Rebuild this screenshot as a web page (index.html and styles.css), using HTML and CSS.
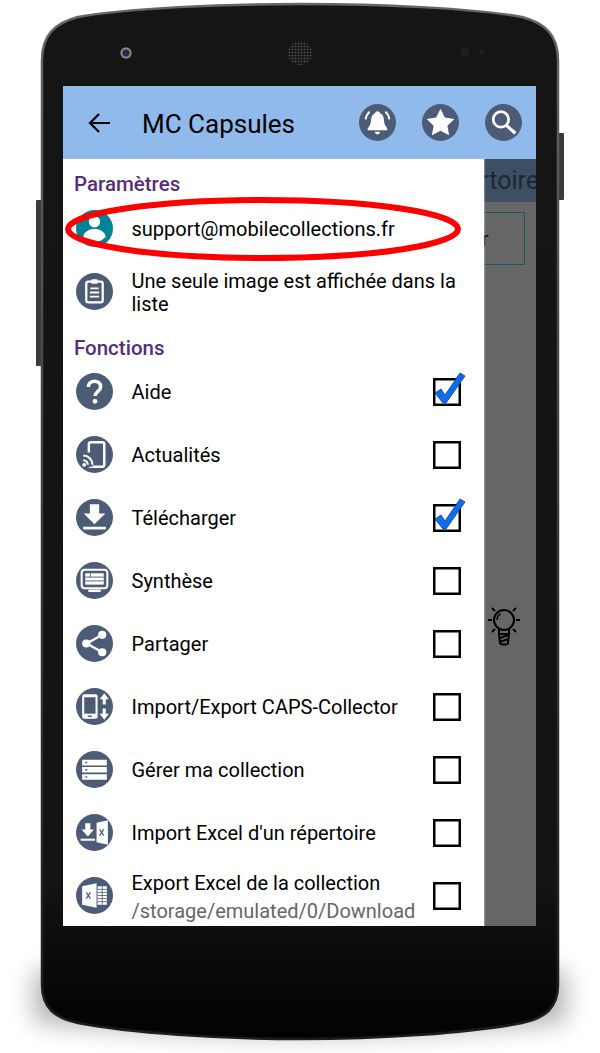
FILE: index.html
```html
<!DOCTYPE html>
<html lang="fr">
<head>
  <meta charset="UTF-8" />
  <title>MC Capsules</title>
  <link rel="stylesheet" href="styles.css">
</head>
<body>

<div class="page">
  <!-- Phone body, drawn behind the screen -->
  <svg class="phone-shape" viewBox="0 0 600 1053" width="600" height="1053">
    <defs>
      <linearGradient id="bodyFill" x1="0" y1="0" x2="0" y2="1">
        <stop offset="0" stop-color="#151515"/>
        <stop offset="0.85" stop-color="#131313"/>
        <stop offset="1" stop-color="#020202"/>
      </linearGradient>
      <linearGradient id="bodyEdge" x1="0" y1="0" x2="0" y2="1">
        <stop offset="0" stop-color="#666"/>
        <stop offset="0.5" stop-color="#3c3c3c"/>
        <stop offset="1" stop-color="#1c1c1c"/>
      </linearGradient>
      <filter id="blur" x="-20%" y="-50%" width="140%" height="200%"><feGaussianBlur stdDeviation="12"/></filter>
      <radialGradient id="lens">
        <stop offset="0" stop-color="#2438c8"/>
        <stop offset="0.4" stop-color="#1c1c2c"/>
        <stop offset="0.8" stop-color="#999"/>
        <stop offset="1" stop-color="#333"/>
      </radialGradient>
      <pattern id="mesh" width="3" height="3" patternUnits="userSpaceOnUse">
        <rect width="3" height="3" fill="#1a1a1a"/>
        <circle cx="1.500" cy="1.500" r="0.800" fill="#555"/>
      </pattern>
    </defs>
    <path d="M34 970H566V1022Q300 1048 34 1022Z" fill="#000" opacity="0.3" filter="url(#blur)"/>
    <rect x="36" y="200" width="8" height="166" rx="1" fill="#3a3a3a"/>
    <rect x="556" y="133" width="8" height="67" rx="1" fill="#3a3a3a"/>
    <path d="M42 60C42 35 55 23 78 17C130 8 220 4 300 4C380 4 470 8 522 17C545 23 558 35 558 60V985C558 1008 545 1018 522 1023C470 1033 380 1039 300 1039C220 1039 130 1033 78 1023C55 1018 42 1008 42 985Z" fill="url(#bodyFill)" stroke="url(#bodyEdge)" stroke-width="2.500"/>
    <circle cx="126" cy="53" r="6" fill="url(#lens)"/>
    <circle cx="300" cy="53" r="12" fill="url(#mesh)"/>
    <circle cx="465" cy="52" r="4.500" fill="#1f1f1f"/>
    <circle cx="482" cy="52" r="3" fill="#1f1f1f"/>
  </svg>

  <div class="screen">
    <header class="appbar">
      <svg class="back" viewBox="0 0 22 20" width="22" height="20">
        <path d="M22 10H2M11 1L2 10l9 9" fill="none" stroke="#000" stroke-width="2.200"/>
      </svg>
      <span class="appbar-title">MC Capsules</span>
      <div class="appbar-actions">
        <svg class="icon" viewBox="0 0 36 36">
          <circle cx="18" cy="18" r="18" fill="#4d5c76"/>
          <path d="M18 7c-1.500 0-2.300 1-2.500 2-2.500 1-3.500 3.500-3.700 6-.2 4-1.300 6.500-3.300 8.500v2h19v-2c-2-2-3.100-4.500-3.300-8.500-.2-2.500-1.200-5-3.700-6-.2-1-1-2-2.500-2z" fill="#fff"/>
          <path d="M15.500 27h5c0 1.500-1 2.500-2.500 2.500s-2.500-1-2.500-2.500z" fill="#fff"/>
          <path d="M6.500 15c.3-3 1.500-5.500 3.800-7.500M29.500 15c-.3-3-1.500-5.500-3.800-7.500" fill="none" stroke="#fff" stroke-width="1.800"/>
        </svg>
        <svg class="icon" viewBox="0 0 36 36">
          <circle cx="18" cy="18" r="18" fill="#4d5c76"/>
          <path d="M18 4.500l4.200 8.700 9.300 1.300-6.800 6.600 1.700 9.400-8.400-4.500-8.400 4.500 1.700-9.400-6.800-6.600 9.300-1.300z" fill="#fff"/>
        </svg>
        <svg class="icon" viewBox="0 0 36 36">
          <circle cx="18" cy="18" r="18" fill="#4d5c76"/>
          <circle cx="15.500" cy="15" r="7.500" fill="none" stroke="#fff" stroke-width="2.600"/>
          <path d="M21 21l8.500 7.500" fill="none" stroke="#fff" stroke-width="3.200"/>
        </svg>
      </div>
    </header>

    <div class="content">
      <nav class="drawer">
        <h2 class="section-title">Paramètres</h2>

        <div class="row">
          <svg class="icon" viewBox="0 0 36 36">
            <circle cx="18" cy="18" r="18" fill="#008299"/>
            <circle cx="18" cy="11.500" r="5.500" fill="#fff"/>
            <path d="M7 26c1-5 6-7.500 11-7.500s10 2.500 11 7.500c-2.500 3-6.500 5-11 5s-8.500-2-11-5z" fill="#fff"/>
          </svg>
          <span class="row-label">support@mobilecollections.fr</span>
        </div>

        <div class="row row-wrap">
          <svg class="icon" viewBox="0 0 36 36">
            <circle cx="18" cy="18" r="18" fill="#4d5c76"/>
            <rect x="10" y="8.500" width="16" height="20" rx="2" fill="none" stroke="#fff" stroke-width="2.200"/>
            <rect x="15" y="6" width="6" height="4.500" rx="1" fill="#fff"/>
            <path d="M14 15h8M13.500 19h9M13.500 23h9" stroke="#fff" stroke-width="1.800"/>
          </svg>
          <span class="row-label row-label-wrap">Une seule image est affichée dans la liste</span>
        </div>

        <h2 class="section-title">Fonctions</h2>

        <div class="row">
          <svg class="icon" viewBox="0 0 36 36">
            <circle cx="18" cy="18" r="18" fill="#4d5c76"/>
            <path d="M12 13.500c0-3.500 2.700-5.500 6-5.500s6 2 6 5.300c0 4.700-5.500 4.700-5.500 9" fill="none" stroke="#fff" stroke-width="3.400"/>
            <circle cx="18.500" cy="27.500" r="2.300" fill="#fff"/>
          </svg>
          <span class="row-label">Aide</span>
          <svg class="check" viewBox="0 0 28 28" width="28" height="28">
            <rect x="1.250" y="1.250" width="25.500" height="25.500" fill="none" stroke="#000" stroke-width="2.500"/>
            <path d="M2 15l6-4 4 6L27-5l5 3-19 27h-3z" fill="#0b6df0" stroke="#0a3c80" stroke-width="0.800"/>
          </svg>
        </div>

        <div class="row">
          <svg class="icon" viewBox="0 0 36 36">
            <circle cx="18" cy="18" r="18" fill="#4d5c76"/>
            <rect x="12.500" y="6" width="15" height="24" rx="2" fill="none" stroke="#fff" stroke-width="2.400"/>
            <path d="M7 16h9v14H7z" fill="#4d5c76"/>
            <path d="M7 19c5 0 9 4 9 9M7 23.500c2.500 0 4.500 2 4.500 4.500" fill="none" stroke="#fff" stroke-width="2"/>
            <circle cx="8" cy="28" r="1.800" fill="#fff"/>
          </svg>
          <span class="row-label">Actualités</span>
          <svg class="check" viewBox="0 0 28 28" width="28" height="28">
            <rect x="1.250" y="1.250" width="25.500" height="25.500" fill="none" stroke="#000" stroke-width="2.500"/>
          </svg>
        </div>

        <div class="row">
          <svg class="icon" viewBox="0 0 36 36">
            <circle cx="18" cy="18" r="18" fill="#4d5c76"/>
            <path d="M13.500 5h9v9h6L18 24.500 7.500 14h6z" fill="#fff"/>
            <rect x="7" y="27" width="22" height="2.600" fill="#fff"/>
          </svg>
          <span class="row-label">Télécharger</span>
          <svg class="check" viewBox="0 0 28 28" width="28" height="28">
            <rect x="1.250" y="1.250" width="25.500" height="25.500" fill="none" stroke="#000" stroke-width="2.500"/>
            <path d="M2 15l6-4 4 6L27-5l5 3-19 27h-3z" fill="#0b6df0" stroke="#0a3c80" stroke-width="0.800"/>
          </svg>
        </div>

        <div class="row">
          <svg class="icon" viewBox="0 0 36 36">
            <circle cx="18" cy="18" r="18" fill="#4d5c76"/>
            <rect x="5.500" y="7.500" width="25" height="18" rx="3" fill="none" stroke="#fff" stroke-width="2"/>
            <rect x="9" y="11" width="18" height="11" fill="#fff"/>
            <path d="M9 14.700h18M9 18.400h18M14 11v3.700" stroke="#4d5c76" stroke-width="0.900"/>
            <path d="M12 28h12" stroke="#fff" stroke-width="2.400"/>
          </svg>
          <span class="row-label">Synthèse</span>
          <svg class="check" viewBox="0 0 28 28" width="28" height="28">
            <rect x="1.250" y="1.250" width="25.500" height="25.500" fill="none" stroke="#000" stroke-width="2.500"/>
          </svg>
        </div>

        <div class="row">
          <svg class="icon" viewBox="0 0 36 36">
            <circle cx="18" cy="18" r="18" fill="#4d5c76"/>
            <path d="M25.500 9.500L10.500 18l15 8.500" fill="none" stroke="#fff" stroke-width="2.400"/>
            <circle cx="25.500" cy="9.500" r="4" fill="#fff"/>
            <circle cx="10" cy="18" r="4" fill="#fff"/>
            <circle cx="25.500" cy="26.500" r="4" fill="#fff"/>
          </svg>
          <span class="row-label">Partager</span>
          <svg class="check" viewBox="0 0 28 28" width="28" height="28">
            <rect x="1.250" y="1.250" width="25.500" height="25.500" fill="none" stroke="#000" stroke-width="2.500"/>
          </svg>
        </div>

        <div class="row">
          <svg class="icon" viewBox="0 0 36 36">
            <circle cx="18" cy="18" r="18" fill="#4d5c76"/>
            <rect x="6" y="6" width="15" height="24" rx="2" fill="#fff"/>
            <rect x="8" y="9" width="11" height="16" fill="#4d5c76"/>
            <path d="M11.500 27.500h4" stroke="#4d5c76" stroke-width="1.400"/>
            <path d="M27.500 5l4.500 6h-3v5h-3v-5h-3zM26 20h3v5h3l-4.500 6-4.500-6h3z" fill="#fff"/>
          </svg>
          <span class="row-label">Import/Export CAPS-Collector</span>
          <svg class="check" viewBox="0 0 28 28" width="28" height="28">
            <rect x="1.250" y="1.250" width="25.500" height="25.500" fill="none" stroke="#000" stroke-width="2.500"/>
          </svg>
        </div>

        <div class="row">
          <svg class="icon" viewBox="0 0 36 36">
            <circle cx="18" cy="18" r="18" fill="#4d5c76"/>
            <path d="M6 8.500h24v5.500H6zM6 15.500h24V21H6zM6 22.500h24V28H6z" fill="#fff"/>
            <path d="M9 11.200h2M9 18.200h2M9 25.200h2" stroke="#4d5c76" stroke-width="1.400"/>
          </svg>
          <span class="row-label">Gérer ma collection</span>
          <svg class="check" viewBox="0 0 28 28" width="28" height="28">
            <rect x="1.250" y="1.250" width="25.500" height="25.500" fill="none" stroke="#000" stroke-width="2.500"/>
          </svg>
        </div>

        <div class="row">
          <svg class="icon" viewBox="0 0 36 36">
            <circle cx="18" cy="18" r="18" fill="#4d5c76"/>
            <path d="M9 9h5v6h3.500l-6 7-6-7H9z" fill="#fff"/>
            <rect x="4.500" y="24" width="14" height="2" fill="#fff"/>
            <path d="M20 8.500l11-2.500v24l-11-2.500z" fill="#fff"/>
            <path d="M23 15l4 6M27 15l-4 6" stroke="#4d5c76" stroke-width="1.200"/>
          </svg>
          <span class="row-label">Import Excel d'un répertoire</span>
          <svg class="check" viewBox="0 0 28 28" width="28" height="28">
            <rect x="1.250" y="1.250" width="25.500" height="25.500" fill="none" stroke="#000" stroke-width="2.500"/>
          </svg>
        </div>

        <div class="row">
          <svg class="icon" viewBox="0 0 36 36">
            <circle cx="18" cy="18" r="18" fill="#4d5c76"/>
            <path d="M6 9l14-3v24l-14-3z" fill="#fff"/>
            <path d="M10 15l4 6M14 15l-4 6" stroke="#4d5c76" stroke-width="1.200"/>
            <rect x="21" y="9" width="9" height="18" fill="#fff"/>
            <path d="M21 12h9M21 15h9M21 18h9M21 21h9M21 24h9M25.500 9v18" stroke="#4d5c76" stroke-width="0.800"/>
          </svg>
          <span class="row-text">
            <span class="row-label">Export Excel de la collection</span>
            <span class="row-sub">/storage/emulated/0/Download</span>
          </span>
          <svg class="check" viewBox="0 0 28 28" width="28" height="28">
            <rect x="1.250" y="1.250" width="25.500" height="25.500" fill="none" stroke="#000" stroke-width="2.500"/>
          </svg>
        </div>
      </nav>

      <!-- Dimmed page behind the drawer -->
      <div class="behind">
        <div class="behind-title">Répertoire</div>
        <div class="behind-button">Trier</div>
        <svg class="bulb" viewBox="0 0 36 44" width="36" height="44">
          <circle cx="18" cy="15" r="10" fill="none" stroke="#000" stroke-width="2"/>
          <path d="M11 15c0-3 1.500-5 3.500-6" fill="none" stroke="#000" stroke-width="1.500"/>
          <path d="M13 24v5h10v-5M13 29l1 9c0 2 8 2 8 0l1-9M14 33l8-3M14 37l8-3" fill="none" stroke="#000" stroke-width="2"/>
          <path d="M2 15h4M30 15h4M6 3l3 3M30 3l-3 3M6 27l3-3M30 27l-3-3" stroke="#000" stroke-width="1.800"/>
        </svg>
      </div>
    </div>

    <!-- Hand-drawn red highlight over the first row -->
    <svg class="highlight" viewBox="0 0 400 70" width="400" height="70">
      <ellipse cx="200" cy="35" rx="195" ry="29" fill="none" stroke="#f00" stroke-width="6"/>
    </svg>
  </div>
</div>

</body>
</html>
```

FILE: styles.css
```css
body {
  margin: 0;
  background: #fff;
  font-family: Roboto, "Liberation Sans", sans-serif;
  color: #000;
}

.page {
  position: relative;
  width: 600px;
  height: 1053px;
  padding: 86px 64px 0 63px;
  box-sizing: border-box;
  overflow: hidden;
}

.phone-shape {
  position: absolute;
  left: 0;
  top: 0;
}

.screen {
  position: relative;
  display: flex;
  flex-direction: column;
  height: 840px;
  overflow: hidden;
}

.icon {
  width: 37px;
  height: 37px;
  flex: none;
}

/* App bar */
.appbar {
  display: flex;
  align-items: center;
  flex: none;
  height: 73px;
  background: #90baec;
  padding-left: 25px;
  padding-right: 14px;
}

.appbar-title {
  margin-left: 32px;
  padding-top: 2px;
  font-size: 26px;
}

.appbar-actions {
  display: flex;
  gap: 26px;
  margin-left: auto;
}

/* Drawer */
.content {
  display: flex;
  flex: 1;
  min-height: 0;
}

.drawer {
  width: 420.500px;
  flex: none;
  background: #fff;
  box-shadow: 1px 0 1px rgba(255, 255, 255, 0.3);
  position: relative;
  z-index: 1;
}

.section-title {
  margin: 0;
  height: 38px;
  box-sizing: border-box;
  padding: 13px 0 0 11px;
  font-size: 20.500px;
  line-height: 24px;
  font-weight: 500;
  color: #552f7a;
}

.row-wrap + .section-title {
  height: 37px;
}

.row {
  display: flex;
  align-items: center;
  height: 63px;
  padding: 0 23px 0 13px;
}

.row-label {
  margin-left: 18.500px;
  padding-top: 2px;
  font-size: 20px;
  line-height: 23px;
}

.row-label-wrap {
  width: 330px;
}

.row-text {
  display: flex;
  flex-direction: column;
  margin-left: 18.500px;
  padding-top: 4px;
  gap: 5px;
}

.row-text .row-label {
  margin-left: 0;
  padding-top: 0;
}

.row-sub {
  font-size: 20px;
  line-height: 23px;
  color: #666;
  white-space: nowrap;
}

.check {
  margin-left: auto;
  flex: none;
  overflow: visible;
}

/* Page behind the drawer */
.behind {
  flex: 1;
  min-width: 0;
  background: #666;
  overflow: hidden;
  display: flex;
  flex-direction: column;
}

.behind-title {
  display: flex;
  justify-content: flex-end;
  align-items: center;
  height: 43px;
  margin-right: -6px;
  padding-right: 3px;
  background: #3f4f63;
  color: #1d2733;
  font-size: 25px;
  white-space: nowrap;
}

.behind-button {
  display: flex;
  justify-content: flex-end;
  align-items: center;
  flex: none;
  box-sizing: border-box;
  width: 81px;
  height: 53px;
  margin: 10px 0 0 -40px;
  padding-right: 35px;
  border: 1.500px solid #1d5560;
  font-size: 20px;
}

.bulb {
  flex: none;
  margin: 340px 0 0 2px;
}

.highlight {
  position: absolute;
  left: 0;
  top: 108px;
  z-index: 2;
}
```
